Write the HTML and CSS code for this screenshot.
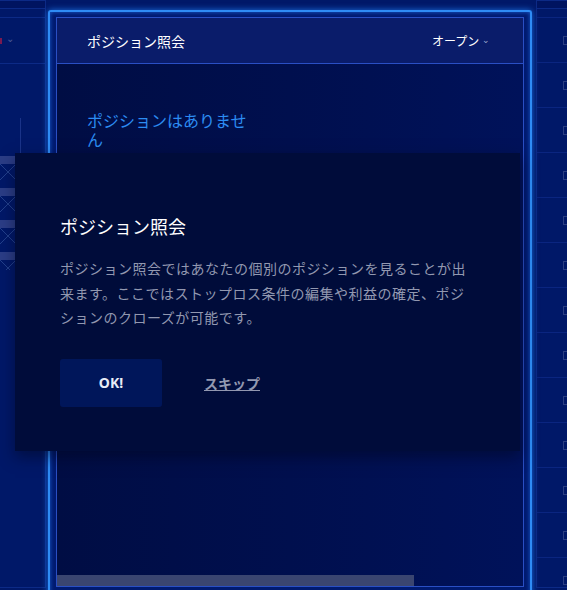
FILE: index.html
```html
<!DOCTYPE html>
<html lang="ja">
<head>
<meta charset="utf-8">
<link rel="stylesheet" href="styles.css">
</head>
<body>
<div class="app">
  <aside class="side side-left">
    <div class="side-top"></div>
    <div class="side-head"><span class="dot"></span><span class="chev">⌄</span></div>
    <div class="side-body">
      <div class="vline"></div>
      <div class="chart"></div>
    </div>
  </aside>

  <main class="panel">
    <div class="panel-inner">
      <header class="panel-head">
        <span class="panel-title">ポジション照会</span>
        <span class="panel-filter">オープン <span class="small-chev">⌄</span></span>
      </header>
      <section class="panel-body">
        <p class="empty">ポジションはありません</p>
        <div class="scroll"><div class="thumb"></div></div>
      </section>
    </div>
  </main>

  <aside class="side side-right">
    <div class="side-top"></div>
    <div class="row"><i class="mark"></i></div>
    <div class="row"><i class="mark"></i></div>
    <div class="row"><i class="mark"></i></div>
    <div class="row"><i class="mark"></i></div>
    <div class="row"><i class="mark"></i></div>
    <div class="row"><i class="mark"></i></div>
    <div class="row"><i class="mark"></i></div>
    <div class="row"><i class="mark"></i></div>
    <div class="row"><i class="mark"></i></div>
    <div class="row"><i class="mark"></i></div>
    <div class="row"><i class="mark"></i></div>
    <div class="row"><i class="mark"></i></div>
    <div class="row"><i class="mark"></i></div>
  </aside>
</div>

<div class="tour">
  <h2 class="tour-title">ポジション照会</h2>
  <p class="tour-text">ポジション照会ではあなたの個別のポジションを見ることが出来ます。ここではストップロス条件の編集や利益の確定、ポジションのクローズが可能です。</p>
  <div class="tour-actions">
    <button class="btn-ok">OK!</button>
    <a class="btn-skip">スキップ</a>
  </div>
</div>
</body>
</html>
```

FILE: styles.css
```css
* { box-sizing: border-box; }
html, body {
  margin: 0;
  padding: 0;
  width: 567px;
  height: 590px;
  overflow: hidden;
  background: #001868;
  font-family: "Noto Sans CJK JP", "Noto Sans", sans-serif;
}
.app {
  display: grid;
  grid-template-columns: 46px 484px 1fr;
  column-gap: 2px;
  height: 590px;
}

/* side panels */
.side {
  display: flex;
  flex-direction: column;
  height: 588px;
  border: 1px solid #0c2a86;
  overflow: hidden;
}
.side-left { border-left: none; }
.side-right { border-right: none; margin-left: 2px; }
.side-top {
  height: 8px;
  flex: none;
  border-bottom: 1px solid #0c2a86;
  margin-bottom: 8px;
  background: #001460;
}
.side-head {
  height: 47px;
  flex: none;
  border-top: 1px solid #0c2a86;
  border-bottom: 1px solid #0c2a86;
  display: flex;
  align-items: center;
  gap: 4px;
  background: #001868;
}
.dot {
  width: 2px;
  height: 6px;
  background: #7a1a50;
}
.chev {
  color: #4a5a95;
  font-size: 10px;
  margin-top: -6px;
}
.side-body {
  flex: 1;
}
.vline {
  margin: 54px 0 0 20px;
  width: 1px;
  height: 36px;
  background: #1a3388;
}
.chart {
  margin-top: 2px;
  width: 16px;
  height: 114px;
  background:
    repeating-linear-gradient(180deg, #2b3d86 0 8px, transparent 8px 32px),
    linear-gradient(45deg, transparent 48%, #23408c 49% 51%, transparent 52%),
    linear-gradient(-45deg, transparent 48%, #23408c 49% 51%, transparent 52%);
  background-size: 100% 32px, 16px 32px, 16px 32px;
  background-repeat: repeat;
}
.side-right .row {
  height: 45px;
  flex: none;
  border-top: 1px solid #0a2580;
  display: flex;
  align-items: center;
  justify-content: flex-end;
}
.mark {
  display: block;
  width: 4px;
  height: 9px;
  border-top: 1px solid #2c3f82;
  border-bottom: 1px solid #2c3f82;
  border-left: 1px solid #2c3f82;
}

/* center panel */
.panel {
  margin-top: 10px;
  height: 590px;
  border: 2px solid #2f8cf5;
  border-bottom: none;
  border-radius: 3px 3px 0 0;
  box-shadow: 0 0 6px #1a6ee0, inset 0 0 4px #1a5fd0;
  padding: 5px 6px 0 6px;
  background: #001a70;
}
.panel-inner {
  border: 1px solid #2a4fc4;
  height: 570px;
  display: flex;
  flex-direction: column;
}
.panel-head {
  height: 46px;
  flex: none;
  display: flex;
  align-items: center;
  justify-content: space-between;
  padding: 0 33px 0 30px;
  background: #0a1c6a;
  border-bottom: 1px solid #2a4fc4;
}
.panel-title {
  color: #ffffff;
  font-size: 14px;
}
.panel-filter {
  color: #ffffff;
  font-size: 12px;
}
.small-chev {
  color: #9aa6cc;
  font-size: 9px;
  position: relative;
  top: -3px;
}
.panel-body {
  flex: 1;
  display: flex;
  flex-direction: column;
  justify-content: space-between;
  background: linear-gradient(90deg, #000d44 0%, #000f4e 50%, #00125a 100%);
}
.empty {
  margin: 47px 0 0 30px;
  width: 166px;
  color: #2c8cf2;
  font-size: 16px;
  line-height: 19px;
}
.scroll {
  height: 11px;
}
.thumb {
  width: 357px;
  height: 11px;
  background: #3a4570;
}

/* tour dialog overlay */
.tour {
  position: absolute;
  left: 15px;
  top: 153px;
  width: 505px;
  height: 298px;
  background: #000c3a;
  box-shadow: 0 6px 14px rgba(0, 5, 30, 0.5);
  padding: 61px 45px 0 45px;
}
.tour-title {
  margin: 0;
  color: #ffffff;
  font-size: 18px;
  font-weight: normal;
  line-height: 24px;
}
.tour-text {
  margin: 18px 0 0 0;
  width: 412px;
  color: #9298b0;
  font-size: 14px;
  letter-spacing: 0.5px;
  line-height: 24.5px;
}
.tour-actions {
  margin-top: 29px;
  display: flex;
  align-items: center;
  gap: 42px;
}
.btn-ok {
  width: 102px;
  height: 48px;
  border: none;
  border-radius: 3px;
  background: #00165a;
  color: #e8ecf6;
  font-family: "Noto Sans", sans-serif;
  font-size: 14px;
  font-weight: bold;
}
.btn-skip {
  color: #9298b0;
  font-size: 14px;
  font-weight: bold;
  text-decoration: underline;
}
```
